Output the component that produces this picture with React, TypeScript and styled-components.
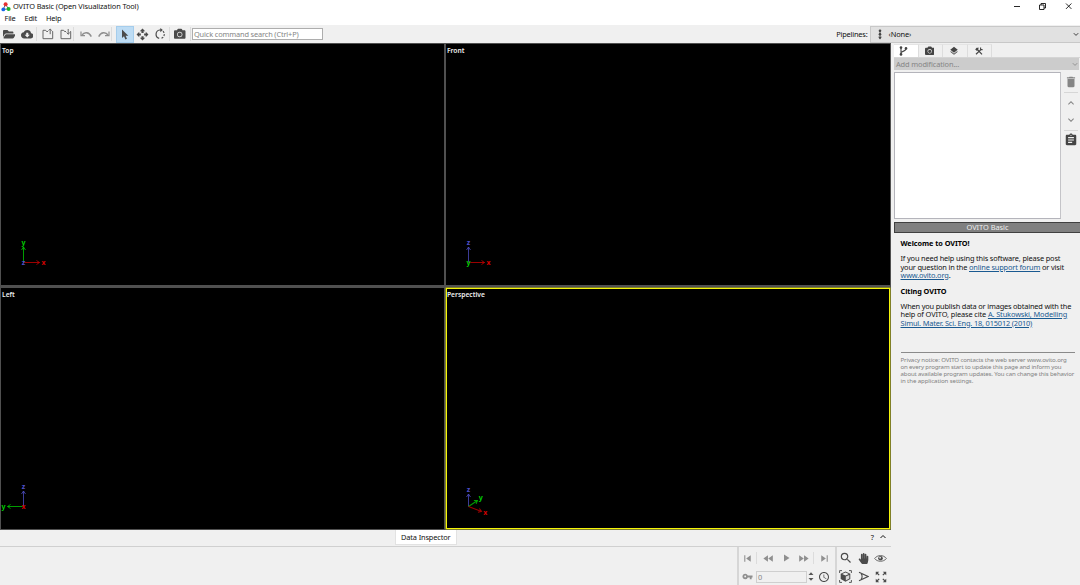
import React from 'react';
import styled, { createGlobalStyle } from 'styled-components';
import {
  MdCloudDownload, MdOpenWith, MdLayers, MdDelete, MdAssignment, MdSkipPrevious,
  MdFastRewind, MdPlayArrow, MdFastForward, MdSkipNext, MdVpnKey, MdAccessTime,
  MdSearch, MdZoomOutMap, MdExpandLess, MdExpandMore,
} from 'react-icons/md';
import { FaFolderOpen, FaHandPaper, FaCamera } from 'react-icons/fa';

const Global = createGlobalStyle`
  * { box-sizing: border-box; }
  body { margin: 0; overflow: hidden; background: #f0f0f0; }
  h2, p { margin: 0; }
`;

const Window = styled.div`
  width: 1080px; height: 585px; display: flex; flex-direction: column;
  background: #f0f0f0; color: #111;
  font: 7.4px/9px "Noto Sans", "Open Sans", sans-serif;
  white-space: nowrap;
`;
const TitleBar = styled.header`
  height: 13px; flex: none; display: flex; align-items: center; background: #fff; padding-left: 1px;
`;
const Title = styled.span`margin-left: 2px; flex: 1; letter-spacing: -0.11px;`;
const WindowButtons = styled.div`display: flex; gap: 17px; padding-right: 7px;`;
const MenuBar = styled.nav`
  height: 12px; flex: none; display: flex; align-items: center; background: #fff; padding: 0 0 1px 4.5px; gap: 9px;
  letter-spacing: -0.2px;
`;
const Toolbar = styled.div`height: 18px; flex: none; display: flex; align-items: center;`;
const Tool = styled.div<{ $w?: number; $active?: boolean; $muted?: boolean }>`
  width: ${p => p.$w ?? 17.5}px; height: 17px; display: flex; align-items: center; justify-content: center;
  flex: none;
  color: ${p => (p.$muted ? '#8f8f8f' : '#4b4b4b')};
  background: ${p => (p.$active ? '#bddcf4' : 'transparent')};
  ${p => (p.$active ? 'box-shadow: inset 0 0 0 1px #a5cdec;' : '')}
`;
const VRule = styled.i<{ $h?: number }>`width: 1px; height: ${p => p.$h ?? 14}px; background: #dcdcdc; flex: none;`;
const HRule = styled.i<{ $gap: string }>`width: 14px; height: 1px; flex: none; background: #d6d6d6; margin: ${p => p.$gap};`;
const Search = styled.div`
  width: 131px; height: 12px; margin-left: 1px; border: 1px solid #adadad; background: #fff;
  color: #858585; line-height: 10px; padding-left: 1px; letter-spacing: -0.15px;
`;
const PipelineLabel = styled.span`margin-left: auto; margin-right: 2.5px; letter-spacing: -0.18px;`;
const PipelineSelect = styled.div`
  width: 210px; height: 17px; display: flex; align-items: center; justify-content: space-between;
  background: #e1e1e1; border: 1px solid #c8c8c8; border-right: 0; padding: 0 1px 0 5.5px;
`;
const SelectValue = styled.span`margin-left: 6px; flex: 1; letter-spacing: -0.1px;`;
const Main = styled.div`flex: 1; display: flex; min-height: 0;`;
const Left = styled.div`width: 891px; flex: none; display: flex; flex-direction: column;`;
const Viewports = styled.div`
  height: 487px; flex: none; display: grid; grid-template-columns: 443px 444px; grid-template-rows: 241px 241px;
  column-gap: 2px; row-gap: 3px; background: #505050; padding: 1px;
`;
const Viewport = styled.section<{ $active?: boolean }>`
  background: #000; color: #eee; font-weight: 600; font-size: 6.7px; line-height: 8px;
  padding: 3px 0 0 1px; position: relative;
  ${p => (p.$active ? 'box-shadow: inset 0 0 0 1px #f5f50a, 0 0 0 0.5px #b0b000;' : '')}
`;
const Tripod = styled.svg`position: absolute; left: -1px; bottom: 9px; overflow: visible;`;
const InspectorBar = styled.div`
  height: 17px; flex: none; display: flex; align-items: flex-start; justify-content: flex-end;
  border-bottom: 1px solid #d0d0d0; gap: 5px; padding-right: 4px;
`;
const InspectorTab = styled.div`
  width: 62px; height: 15px; line-height: 14px; background: #fff; border: 1px solid #e2e2e2; border-top: 0;
  text-align: center; margin-right: 409px; letter-spacing: -0.13px;
`;
const Help = styled.span`line-height: 14px;`;
const Controls = styled.div`flex: 1; display: flex; justify-content: flex-end; color: #858585;`;
const Playback = styled.div`
  width: 98px; border-left: 2px solid #d6d6d6; padding: 2px 0 0 0; display: flex; flex-direction: column;
`;
const ControlRow = styled.div`display: flex; align-items: center; height: 18.5px; flex: none;`;
const FrameField = styled.div`
  width: 51px; height: 12px; border: 1px solid #cfcfcf; background: #f0f0f0; line-height: 10px; padding-left: 1px;
`;
const Navigation = styled.div`
  width: 56px; border-left: 2px solid #d6d6d6; padding-top: 2px; display: grid;
  grid-template-columns: repeat(3, 17.6px); grid-auto-rows: 18.5px; align-items: center;
`;
const SidePanel = styled.aside`width: 189px; flex: none; padding: 1px 0 0 3px; display: flex; flex-direction: column;`;
const Tabs = styled.div`display: flex; height: 14px; flex: none; border-bottom: 1px solid #d5d5d5;`;
const Tab = styled.div<{ $active?: boolean }>`
  width: 24.6px; display: flex; align-items: center; justify-content: center; color: #444;
  padding-right: ${p => (p.$active ? 5 : 2)}px;
  background: ${p => (p.$active ? '#fff' : '#f0f0f0')}; border-right: 1px solid #ddd; border-top: 1px solid #e4e4e4;
`;
const ModifierSelect = styled.div`
  width: 185px; height: 12px; flex: none; background: #ccc; color: #858585; display: flex;
  align-items: center; justify-content: space-between; padding: 0 1px 0 2px; letter-spacing: -0.12px;
`;
const Editor = styled.div`display: flex; margin-top: 2px;`;
const ModifierList = styled.div`width: 167px; height: 147px; background: #fff; border: 1px solid #b4b4bb; border-right-color: #c4c4c8;`;
const SideTools = styled.div`width: 19px; padding: 3px 0 0 1px; display: flex; flex-direction: column; align-items: center; color: #858585;`;
const DownIcon = styled(MdExpandMore)`margin-top: 4.5px;`;
const Rollout = styled.div`
  height: 11px; margin-top: 3px; background: #808080; border: 1px solid #404040; border-right: 0; flex: none;
  color: #eee; text-align: center; line-height: 9px; letter-spacing: -0.03px;
`;
const Welcome = styled.article`padding: 6px 0 0 6.5px; line-height: 8.5px;`;
const Heading = styled.h2`font-size: 7.3px; line-height: 9px; font-weight: 700; letter-spacing: -0.05px; color: #000;`;
const Paragraph = styled.p`margin: 6px 0 7px;`;
const Line = styled.span<{ $ls?: number }>`display: block; letter-spacing: ${p => p.$ls ?? -0.16}px;`;
const Link = styled.span`color: #1a5a91; text-decoration: underline;`;
const Notice = styled.p`
  width: 174px; margin-top: 24.5px; border-top: 1px solid #8a8a8a; padding-top: 3px;
  color: #808080; font-size: 6.1px; line-height: 7.3px;
`;

const line = { fill: 'none', stroke: 'currentColor' } as const;

const Logo = () => (
  <svg width="10" height="10" viewBox="0 0 10 10">
    <path d="M4.6 2.3 2.2 7.3 7.5 7Z" stroke="#667" strokeWidth="1" fill="none" />
    <circle cx="4.6" cy="2.3" r="2" fill="#e83030" /><circle cx="2.3" cy="7.4" r="1.9" fill="#1767e8" /><circle cx="7.6" cy="7" r="2" fill="#18b52b" />
  </svg>
);
const FileArrow = ({ down }: { down?: boolean }) => (
  <svg width="12" height="12" viewBox="0 0 12 12" fill="none" stroke="#666" strokeWidth="1">
    <path d="M6 3.5H4.5L3.7 2.3H1V10.7H10.7V3.5H10" />
    <path d={down ? 'M8.2 1V6.2M6.6 4.6 8.2 6.2 9.8 4.6' : 'M8.2 6.2V1M6.6 2.6 8.2 1 9.8 2.6'} />
  </svg>
);
const Undo = ({ flip }: { flip?: boolean }) => (
  <svg width="12" height="12" viewBox="0 0 12 12" {...line}>
    <g transform={flip ? 'translate(12 0) scale(-1 1)' : undefined}>
      <path d="M2 7C4 4 9 3.6 11.3 8.6" strokeWidth="1.4" /><path d="M1 3.6V7.6H5" strokeWidth="1.2" />
    </g>
  </svg>
);
const Cursor = () => (
  <svg width="8" height="11" viewBox="0 0 8 11"><path d="M1 0.5V9L3 7.2 4.4 10.5 6 9.8 4.6 6.7H7.3Z" fill="currentColor" /></svg>
);
const Rotate = () => (
  <svg width="12" height="12" viewBox="0 0 12 12" {...line}>
    <path d="M5.2 10.4A4.3 4.3 0 0 1 5.8 2H7" strokeWidth="1.2" />
    <path d="M6.3 0 8.8 2 6.3 4.2Z" fill="currentColor" stroke="none" />
    <path d="M9 3.2A4.3 4.3 0 0 1 6.5 10.5" strokeWidth="1.2" strokeDasharray="2 1.2" />
  </svg>
);
const PipelineIcon = () => (
  <svg width="6" height="11" viewBox="0 0 6 11" fill="#444">
    <path d="M3 1V10" stroke="#555" /><circle cx="3" cy="1.7" r="1.3" /><circle cx="3" cy="5.3" r="1.3" /><path d="M1.2 7.8H4.8L3 10.6Z" />
  </svg>
);
const Branch = () => (
  <svg width="9" height="10" viewBox="0 0 9 10" {...line}>
    <path d="M2 1.5V8.5M2 7C2 4.8 7 6 7 2.5" strokeWidth="1.1" />
    <g fill="currentColor" stroke="none"><circle cx="2" cy="1.6" r="1.3" /><circle cx="2" cy="8.4" r="1.3" /><circle cx="7" cy="2.4" r="1.3" /></g>
  </svg>
);
const Tools = () => (
  <svg width="8" height="8" viewBox="0 0 8 8" {...line}>
    <path d="M1 7.3 5.6 2.9M2.8 3 7 7.3" strokeWidth="1.2" />
    <path d="M.2 2.6 1.6.8 4.2.7 3 2 3.4 2.8 2 4Z" fill="currentColor" stroke="none" />
    <path d="M5.6.6V2.6H7.6" strokeWidth="1.1" />
  </svg>
);
const Eye = () => (
  <svg width="13" height="9" viewBox="0 0 13 9" {...line}>
    <path d="M.6 4.5C3.5.6 9.5.6 12.4 4.5 9.5 8.2 3.5 8.2.6 4.5Z" strokeWidth=".8" />
    <circle cx="6.5" cy="4.2" r="2.3" fill="currentColor" stroke="none" /><circle cx="6.1" cy="3.7" r=".9" fill="#f0f0f0" stroke="none" />
  </svg>
);
const CubeFrame = () => (
  <svg width="13" height="13" viewBox="0 0 13 13" {...line}>
    <path d="M.6 3V.6H3M10 .6H12.4V3M12.4 10V12.4H10M3 12.4H.6V10" strokeWidth=".9" />
    <path d="M6.5 1.4 11.3 3.7V9L6.5 11.8 1.7 9V3.7Z" fill="currentColor" stroke="none" />
    <path d="M6.5 2.5 9.8 4.1 6.5 5.6 3.2 4.1Z" fill="#f0f0f0" stroke="none" /><path d="M6.8 6.6 10.3 5V8.4L6.8 10.5Z" fill="#d8d8d8" stroke="none" />
  </svg>
);
const FieldOfView = () => (
  <svg width="11" height="11" viewBox="0 0 11 11" {...line}><path d="M1 1.2 10 5.5 1 9.8M3.2 2.6Q5 5.5 3.2 8.4" strokeWidth="1.1" /></svg>
);
const Spin = () => (
  <svg width="6" height="11" viewBox="0 0 6 11" fill="#555"><path d="M.5 3.9 3 1.2 5.5 3.9ZM.5 7.1 3 9.8 5.5 7.1Z" /></svg>
);
const Chevron = () => (
  <svg width="6" height="5" viewBox="0 0 6 5" {...line}><path d="M.8 1.2 3 3.4 5.2 1.2" strokeWidth=".8" /></svg>
);

const colors = { x: '#d00000', y: '#00d000', z: '#5050c8' };
type Axis = { name: 'x' | 'y' | 'z'; dx: number; dy: number };
const AxisTripod = ({ axes }: { axes: Axis[] }) => (
  <Tripod width="50" height="40" viewBox="0 0 50 40" fontSize="7" fontWeight="700">
    {axes.map(({ name, dx, dy }) => {
      const len = Math.hypot(dx, dy);
      const angle = (Math.atan2(dy, dx) * 180) / Math.PI;
      const k = len ? (len + 4) / len : 0;
      return (
        <g key={name} stroke={colors[name]}>
          {len > 0 && <path transform={`translate(23.5 26.5) rotate(${angle})`} d={`M0 0H${len}M${len - 3} -2 L${len} 0 L${len - 3} 2`} fill="none" opacity=".75" />}
          <text x={23.5 + dx * k} y={28.5 + dy * k} textAnchor="middle" fill={colors[name]} stroke="none">{name}</text>
        </g>
      );
    })}
  </Tripod>
);

const views: { name: string; active?: boolean; axes: Axis[] }[] = [
  { name: 'Top', axes: [{ name: 'x', dx: 16, dy: 0 }, { name: 'y', dx: 0, dy: -15.5 }, { name: 'z', dx: 0, dy: 0 }] },
  { name: 'Front', axes: [{ name: 'x', dx: 16, dy: 0 }, { name: 'z', dx: 0, dy: -15.5 }, { name: 'y', dx: 0, dy: 0 }] },
  { name: 'Left', axes: [{ name: 'y', dx: -16, dy: 0 }, { name: 'z', dx: 0, dy: -15.5 }, { name: 'x', dx: 0, dy: 0 }] },
  { name: 'Perspective', active: true, axes: [{ name: 'z', dx: 0, dy: -12.5 }, { name: 'y', dx: 9, dy: -6 }, { name: 'x', dx: 13, dy: 5 }] },
];

export default function App() {
  return (
    <Window>
      <Global />
      <TitleBar>
        <Logo /><Title>OVITO Basic (Open Visualization Tool)</Title>
        <WindowButtons>
          <svg width="8" height="9" viewBox="0 0 8 9" {...line}><path d="M1 4.5H7" strokeWidth=".9" /></svg>
          <svg width="9" height="9" viewBox="0 0 9 9" {...line}><path d="M1.5 3H6V7.5H1.5ZM3 3V1.5H7.5V6H6" strokeWidth=".9" /></svg>
          <svg width="9" height="9" viewBox="0 0 9 9" {...line}><path d="M2 1.5 7.4 6.9M7.4 1.5 2 6.9" strokeWidth=".9" /></svg>
        </WindowButtons>
      </TitleBar>
      <MenuBar><span>File</span><span>Edit</span><span>Help</span></MenuBar>
      <Toolbar>
        <Tool $w={18}><FaFolderOpen size={12.5} /></Tool><Tool $w={18}><MdCloudDownload size={12.5} /></Tool>
        <VRule /><Tool $w={21}><FileArrow /></Tool><Tool $w={15}><FileArrow down /></Tool>
        <VRule /><Tool $w={23} $muted><Undo /></Tool><Tool $w={14} $muted><Undo flip /></Tool>
        <VRule /><Tool $w={4} /><Tool $w={18} $active><Cursor /></Tool><Tool $w={16}><MdOpenWith size={13} /></Tool><Tool $w={19}><Rotate /></Tool>
        <VRule /><Tool $w={20}><FaCamera size={11.5} /></Tool><VRule />
        <Search>Quick command search (Ctrl+P)</Search>
        <PipelineLabel>Pipelines:</PipelineLabel>
        <PipelineSelect><PipelineIcon /><SelectValue>‹None›</SelectValue><Chevron /></PipelineSelect>
      </Toolbar>
      <Main>
        <Left>
          <Viewports>
            {views.map(v => <Viewport key={v.name} $active={v.active}>{v.name}<AxisTripod axes={v.axes} /></Viewport>)}
          </Viewports>
          <InspectorBar>
            <InspectorTab>Data Inspector</InspectorTab><Help>?</Help>
            <svg width="8" height="13" viewBox="0 0 8 13" {...line}><path d="M1.5 8 4 5.5 6.5 8" /></svg>
          </InspectorBar>
          <Controls>
            <Playback>
              <ControlRow>
                <Tool $w={17} $muted><MdSkipPrevious size={13} /></Tool><VRule $h={12} />
                <Tool $w={22} $muted><MdFastRewind size={13} /></Tool><Tool $w={14} $muted><MdPlayArrow size={12} /></Tool>
                <Tool $w={20} $muted><MdFastForward size={13} /></Tool><VRule $h={12} /><Tool $w={20} $muted><MdSkipNext size={13} /></Tool>
              </ControlRow>
              <ControlRow>
                <Tool $w={17} $muted><MdVpnKey size={11} /></Tool><FrameField>0</FrameField><Tool $w={8.5}><Spin /></Tool>
                <Tool $w={17}><MdAccessTime size={12} /></Tool>
              </ControlRow>
            </Playback>
            <Navigation>
              <Tool><MdSearch size={14} /></Tool><Tool><FaHandPaper size={11} /></Tool><Tool><Eye /></Tool>
              <Tool><CubeFrame /></Tool><Tool><FieldOfView /></Tool><Tool><MdZoomOutMap size={14} /></Tool>
            </Navigation>
          </Controls>
        </Left>
        <SidePanel>
          <Tabs>
            <Tab $active><Branch /></Tab><Tab><FaCamera size={9.5} /></Tab><Tab><MdLayers size={10} /></Tab><Tab><Tools /></Tab>
          </Tabs>
          <ModifierSelect>Add modification...<Chevron /></ModifierSelect>
          <Editor>
            <ModifierList />
            <SideTools>
              <MdDelete size={14} /><HRule $gap="3px 0 4px" /><MdExpandLess size={12} /><DownIcon size={12} />
              <HRule $gap="4px 0 2.5px" /><MdAssignment size={14} color="#444" />
            </SideTools>
          </Editor>
          <Rollout>OVITO Basic</Rollout>
          <Welcome>
            <Heading>Welcome to OVITO!</Heading>
            <Paragraph>
              <Line>If you need help using this software, please post</Line>
              <Line>your question in the <Link>online support forum</Link> or visit</Line>
              <Line><Link>www.ovito.org</Link>.</Line>
            </Paragraph>
            <Heading>Citing OVITO</Heading>
            <Paragraph>
              <Line $ls={-0.18}>When you publish data or images obtained with the</Line>
              <Line $ls={-0.12}>help of OVITO, please cite <Link>A. Stukowski, Modelling</Link></Line>
              <Line><Link>Simul. Mater. Sci. Eng. 18, 015012 (2010)</Link></Line>
            </Paragraph>
            <Notice>
              <Line $ls={-0.13}>Privacy notice: OVITO contacts the web server www.ovito.org</Line>
              <Line $ls={-0.14}>on every program start to update this page and inform you</Line>
              <Line $ls={-0.14}>about available program updates. You can change this behavior</Line>
              <Line $ls={-0.1}>in the application settings.</Line>
            </Notice>
          </Welcome>
        </SidePanel>
      </Main>
    </Window>
  );
}
